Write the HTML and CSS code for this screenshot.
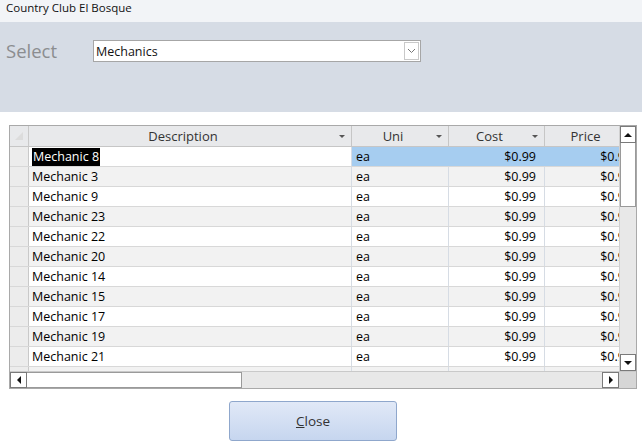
FILE: index.html
```html
<!DOCTYPE html>
<html>
<head>
<meta charset="utf-8">
<link rel="stylesheet" href="styles.css">
</head>
<body>
<div class="titlebar">Country Club El Bosque</div>
<div class="header">
  <span class="select-label">Select</span>
  <div class="combo">
    <span class="combo-text">Mechanics</span>
    <span class="combo-btn"><svg width="9" height="6" viewBox="0 0 9 6"><path d="M1 1 L4.5 4.5 L8 1" fill="none" stroke="#777" stroke-width="1"/></svg></span>
  </div>
</div>
<div class="grid">
  <div class="main">
    <div class="table">
      <div class="row head">
        <div class="cell sel corner"><svg width="10" height="10" viewBox="0 0 10 10"><path d="M9 1 L9 9 L1 9 Z" fill="#dcdcdc"/></svg></div>
        <div class="cell hcell">Description<span class="arr"></span></div>
        <div class="cell hcell">Uni<span class="arr"></span></div>
        <div class="cell hcell">Cost<span class="arr"></span></div>
        <div class="cell hcell">Price<span class="arr"></span></div>
      </div>
      <div class="row current">
        <div class="cell sel"></div>
        <div class="cell desc"><span class="hl">Mechanic 8</span></div>
        <div class="cell unit picked">ea</div>
        <div class="cell num picked">$0.99</div>
        <div class="cell num picked">$0.99</div>
      </div>
      <div class="row alt"><div class="cell sel"></div><div class="cell desc">Mechanic 3</div><div class="cell unit">ea</div><div class="cell num">$0.99</div><div class="cell num">$0.99</div></div>
      <div class="row"><div class="cell sel"></div><div class="cell desc">Mechanic 9</div><div class="cell unit">ea</div><div class="cell num">$0.99</div><div class="cell num">$0.99</div></div>
      <div class="row alt"><div class="cell sel"></div><div class="cell desc">Mechanic 23</div><div class="cell unit">ea</div><div class="cell num">$0.99</div><div class="cell num">$0.99</div></div>
      <div class="row"><div class="cell sel"></div><div class="cell desc">Mechanic 22</div><div class="cell unit">ea</div><div class="cell num">$0.99</div><div class="cell num">$0.99</div></div>
      <div class="row alt"><div class="cell sel"></div><div class="cell desc">Mechanic 20</div><div class="cell unit">ea</div><div class="cell num">$0.99</div><div class="cell num">$0.99</div></div>
      <div class="row"><div class="cell sel"></div><div class="cell desc">Mechanic 14</div><div class="cell unit">ea</div><div class="cell num">$0.99</div><div class="cell num">$0.99</div></div>
      <div class="row alt"><div class="cell sel"></div><div class="cell desc">Mechanic 15</div><div class="cell unit">ea</div><div class="cell num">$0.99</div><div class="cell num">$0.99</div></div>
      <div class="row"><div class="cell sel"></div><div class="cell desc">Mechanic 17</div><div class="cell unit">ea</div><div class="cell num">$0.99</div><div class="cell num">$0.99</div></div>
      <div class="row alt"><div class="cell sel"></div><div class="cell desc">Mechanic 19</div><div class="cell unit">ea</div><div class="cell num">$0.99</div><div class="cell num">$0.99</div></div>
      <div class="row"><div class="cell sel"></div><div class="cell desc">Mechanic 21</div><div class="cell unit">ea</div><div class="cell num">$0.99</div><div class="cell num">$0.99</div></div>
      <div class="row alt"><div class="cell sel"></div><div class="cell desc">Mechanic 16</div><div class="cell unit">ea</div><div class="cell num">$0.99</div><div class="cell num">$0.99</div></div>
    </div>
    <div class="vscroll">
      <div class="sbtn"><span class="tri up"></span></div>
      <div class="vthumb"></div>
      <div class="vtrack"></div>
      <div class="sbtn"><span class="tri down"></span></div>
    </div>
  </div>
  <div class="hscroll">
    <div class="sbtn h"><span class="tri left"></span></div>
    <div class="hthumb"></div>
    <div class="htrack"></div>
    <div class="sbtn h"><span class="tri right"></span></div>
    <div class="sizer"></div>
  </div>
</div>
<div class="footer">
  <button class="close-btn"><u>C</u>lose</button>
</div>
</body>
</html>
```
FILE: styles.css
```css
html, body {
  margin: 0;
  padding: 0;
}
body {
  width: 642px;
  height: 447px;
  overflow: hidden;
  background: #ffffff;
  font-family: "Open Sans", "Noto Sans", "Liberation Sans", sans-serif;
  font-size: 12px;
  color: #000;
}
.titlebar {
  height: 22px;
  line-height: 16px;
  padding-left: 6px;
  background: #f2f4f7;
  font-size: 11.5px;
  color: #111;
  box-sizing: border-box;
}
.header {
  height: 90px;
  background: #d6dce5;
  display: flex;
  align-items: flex-start;
  padding-top: 18px;
  box-sizing: border-box;
}
.select-label {
  font-size: 18.5px;
  color: #8b8d90;
  margin-left: 6px;
  width: 87px;
  line-height: 22px;
}
.combo {
  width: 328px;
  height: 22px;
  box-sizing: border-box;
  border: 1px solid #a6a6a6;
  background: #fff;
  display: flex;
  align-items: center;
}
.combo-text {
  flex: 1;
  padding-left: 2px;
  font-size: 12.5px;
  color: #111;
}
.combo-btn {
  width: 15px;
  height: 18px;
  margin-right: 1px;
  border: 1px solid #c9c9c9;
  box-sizing: border-box;
  display: flex;
  align-items: center;
  justify-content: center;
  background: #fff;
}
.grid {
  margin: 13px 0 0 9px;
  width: 628px;
  height: 264px;
  box-sizing: border-box;
  border: 1px solid #a9a9a9;
  display: flex;
  flex-direction: column;
  background: #fff;
}
.main {
  flex: 1;
  display: flex;
  min-height: 0;
}
.table {
  flex: 1;
  overflow: hidden;
}
.row {
  display: grid;
  grid-template-columns: 19px 323px 97px 96px 96px;
  height: 20px;
  border-bottom: 1px solid #d8d8d8;
  box-sizing: border-box;
  background: #fff;
}
.row.alt {
  background: #f2f2f2;
}
.row.head {
  height: 21px;
  background: #e8e9eb;
  border-bottom: 1px solid #c6c6c6;
}
.cell {
  border-right: 1px solid #d6dce4;
  box-sizing: border-box;
  line-height: 19px;
  white-space: nowrap;
  overflow: hidden;
  font-size: 12.5px;
}
.cell.sel {
  background: #ececec;
  border-right: 1px solid #c9c9c9;
}
.cell.corner {
  display: flex;
  align-items: center;
  justify-content: center;
  background: #e8e9eb;
}
.hcell {
  position: relative;
  text-align: center;
  color: #333;
  border-right: 1px solid #c6c6c6;
  line-height: 20px;
  font-size: 13px;
  padding-right: 14px;
}
.arr {
  position: absolute;
  right: 6px;
  top: 9px;
  width: 0;
  height: 0;
  border-left: 3px solid transparent;
  border-right: 3px solid transparent;
  border-top: 3px solid #555;
}
.desc {
  padding-left: 3px;
}
.hl {
  background: #000;
  color: #fff;
  padding: 0 1px;
  display: inline-block;
  line-height: 18px;
}
.unit {
  padding-left: 4px;
}
.num {
  text-align: right;
  padding-right: 8px;
}
.picked {
  background: #a6cdf0;
  border-right-color: #a6cdf0;
}
.vscroll {
  width: 17px;
  display: flex;
  flex-direction: column;
  background: #e8e8e8;
  border-left: 1px solid #d0d0d0;
  box-sizing: border-box;
}
.sbtn {
  height: 17px;
  box-sizing: border-box;
  border: 1px solid #7a7a7a;
  background: #fff;
  display: flex;
  align-items: center;
  justify-content: center;
}
.sbtn.h {
  width: 17px;
  height: 16px;
}
.vthumb {
  height: 64px;
  background: #fff;
  border: 1px solid #9a9a9a;
  border-top: none;
  box-sizing: border-box;
}
.vtrack {
  flex: 1;
}
.hscroll {
  height: 17px;
  display: flex;
  background: #e8e8e8;
  border-top: 1px solid #c9c9c9;
  box-sizing: border-box;
}
.hthumb {
  width: 215px;
  background: #fff;
  border: 1px solid #9a9a9a;
  border-left: none;
  box-sizing: border-box;
}
.htrack {
  flex: 1;
}
.sizer {
  width: 17px;
  background: #d6d6d6;
}
.tri {
  width: 0;
  height: 0;
}
.tri.up {
  border-left: 4px solid transparent;
  border-right: 4px solid transparent;
  border-bottom: 4px solid #111;
}
.tri.down {
  border-left: 4px solid transparent;
  border-right: 4px solid transparent;
  border-top: 4px solid #111;
}
.tri.left {
  border-top: 4px solid transparent;
  border-bottom: 4px solid transparent;
  border-right: 4px solid #111;
}
.tri.right {
  border-top: 4px solid transparent;
  border-bottom: 4px solid transparent;
  border-left: 4px solid #111;
}
.footer {
  display: flex;
  padding: 12px 0 0 229px;
}
.close-btn {
  width: 168px;
  height: 40px;
  border: 1px solid #8fa7cc;
  border-radius: 3px;
  background: linear-gradient(#e1e9f7, #c6d6ef);
  font-family: "Open Sans", "Noto Sans", "Liberation Sans", sans-serif;
  font-size: 13.5px;
  color: #333;
  padding: 0;
}
```
